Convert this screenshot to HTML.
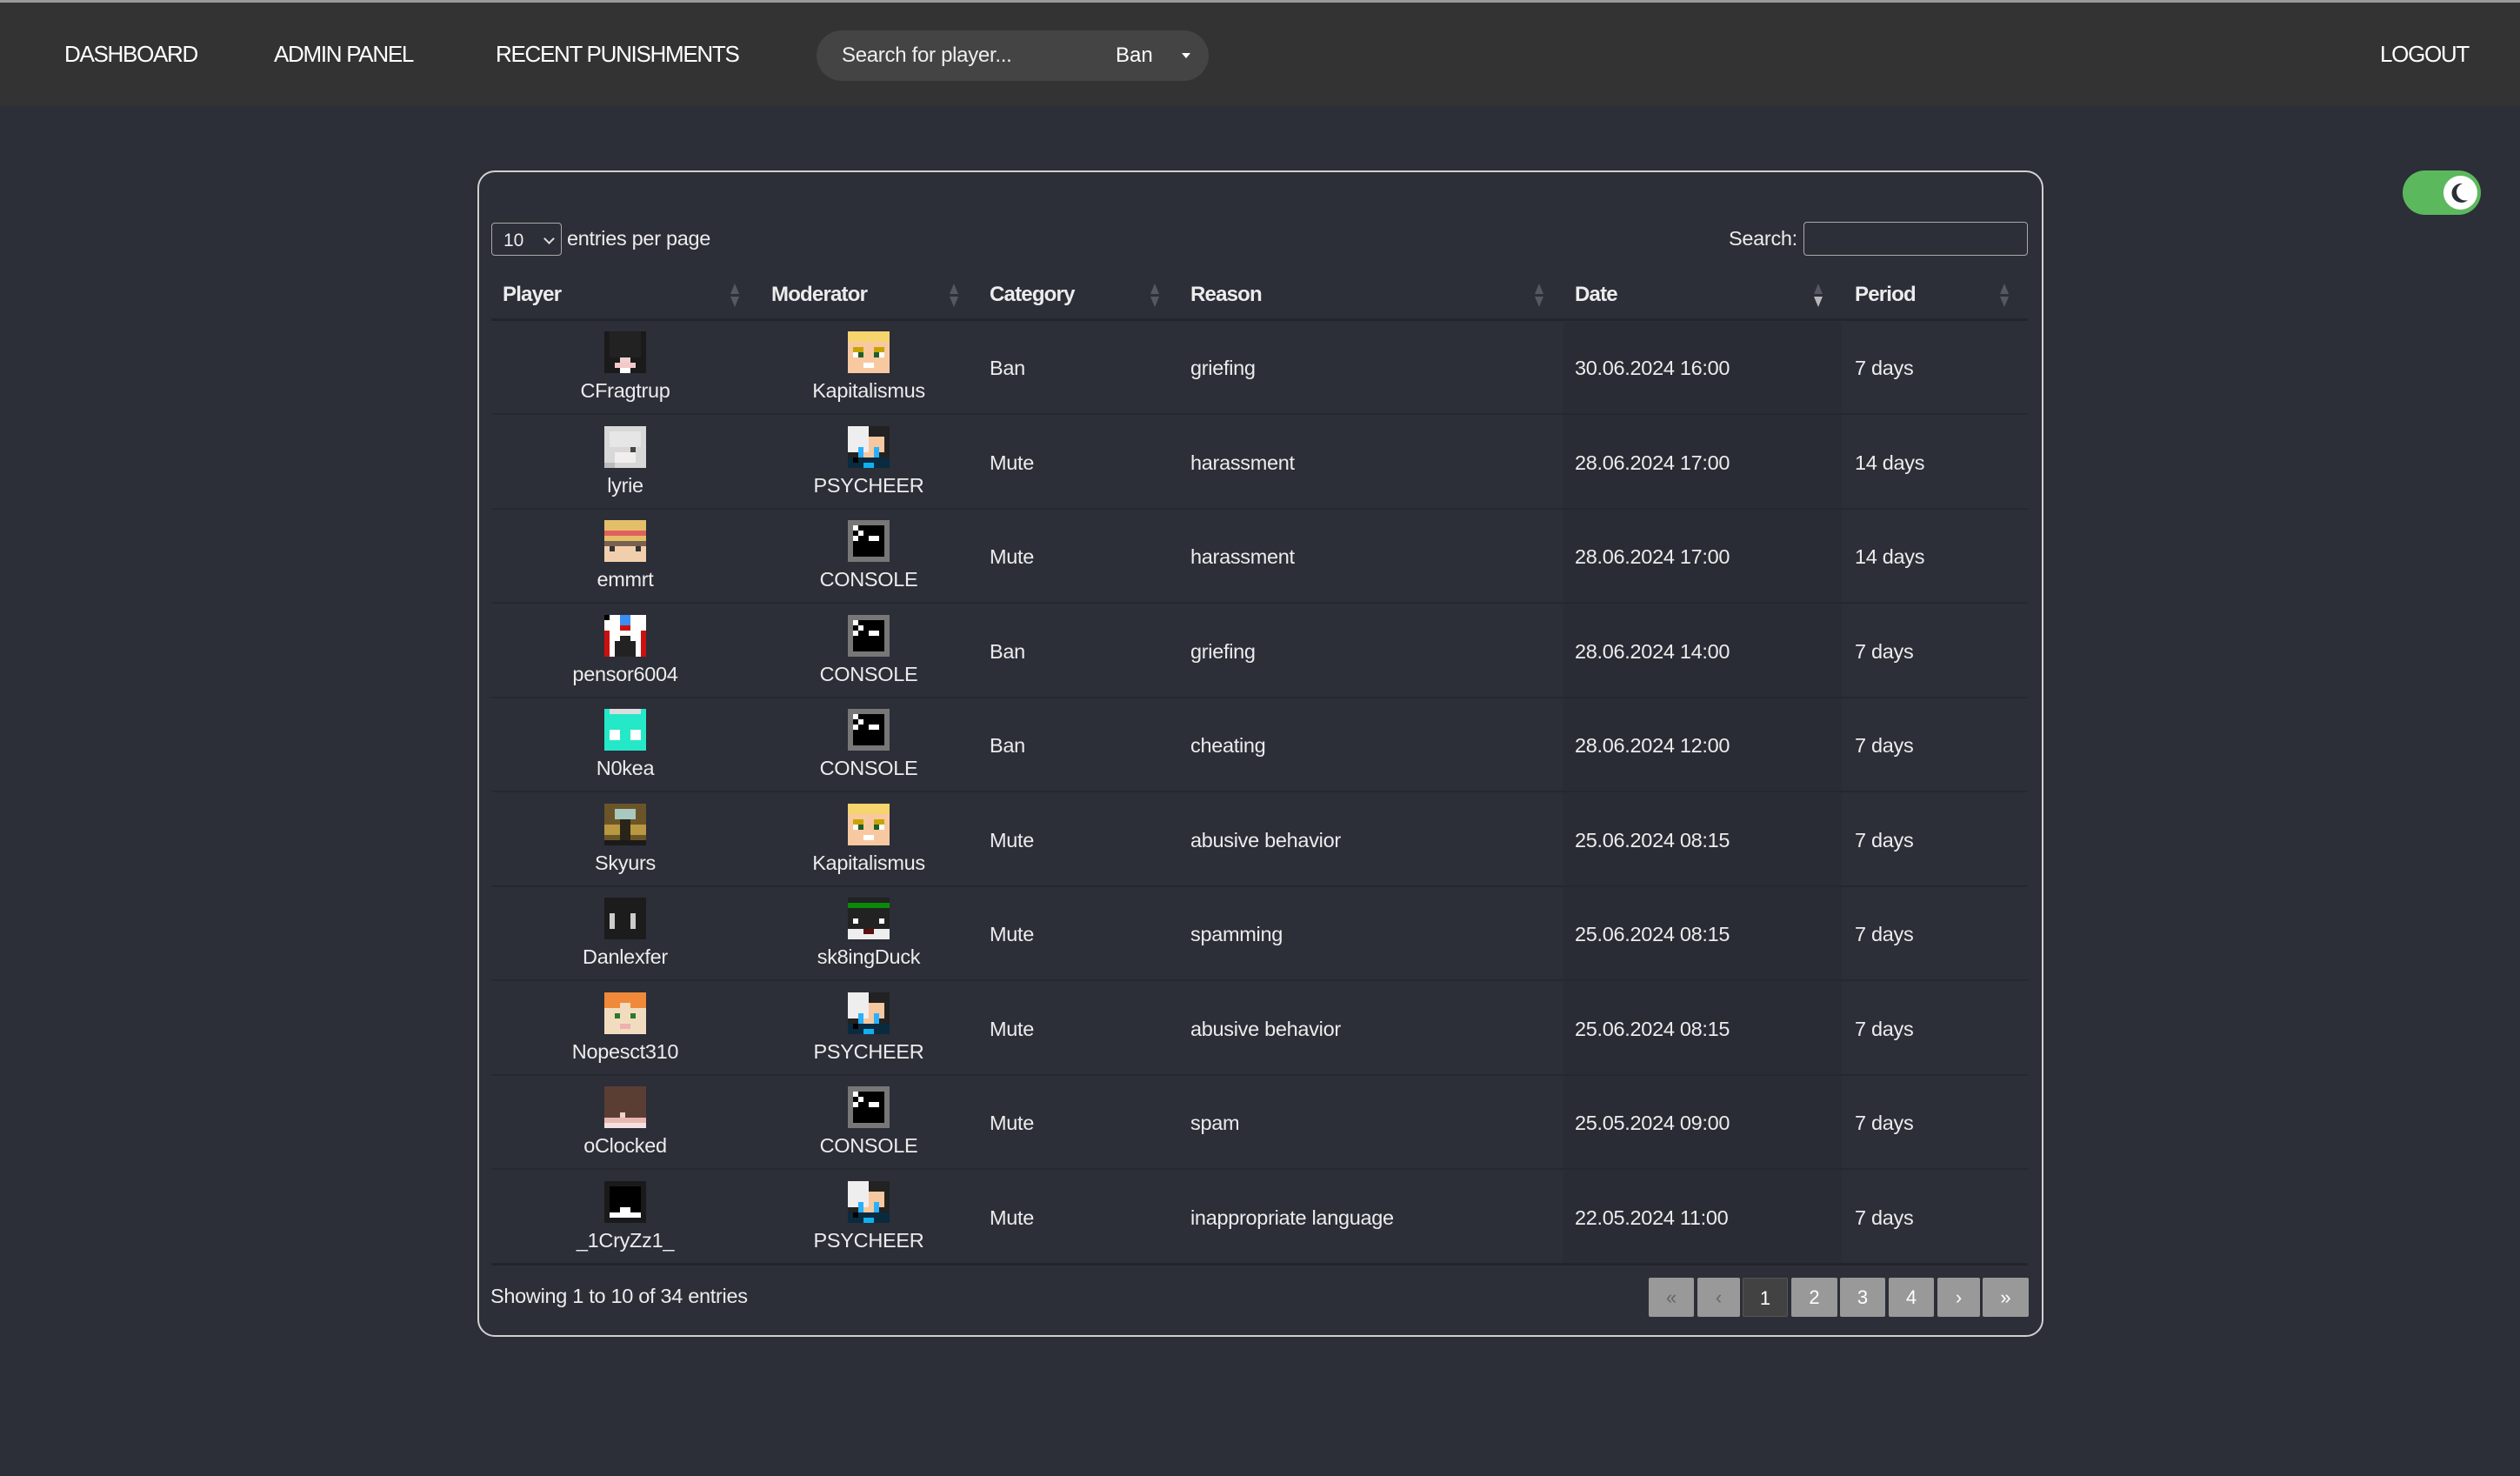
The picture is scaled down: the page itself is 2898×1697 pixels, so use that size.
<!DOCTYPE html>
<html><head><meta charset="utf-8">
<style>
*{margin:0;padding:0;box-sizing:border-box}
html,body{width:2898px;height:1697px;overflow:hidden;background:#2c2e38;font-family:"Liberation Sans",sans-serif;color:#ececec}
.nav{position:absolute;left:0;top:0;width:2898px;height:122px;background:#333333;border-top:3px solid #9a9a9a}
.nav a{position:absolute;top:44px;font-size:26px;color:#fff;letter-spacing:-1.3px;font-weight:500}
.pill{position:absolute;left:939px;top:32px;width:451px;height:58px;background:#444;border-radius:29px}
.pill .ph{position:absolute;left:29px;top:15px;font-size:24px;color:#eee;letter-spacing:-0.3px}
.pill .ban{position:absolute;left:344px;top:15px;font-size:24px;color:#fff}
.pill .car{position:absolute;left:420px;top:26px;width:0;height:0;border-left:5px solid transparent;border-right:5px solid transparent;border-top:6px solid #fff}
.card{position:absolute;left:549px;top:196px;width:1801px;height:1341px;border:2px solid #d0d0d0;border-radius:20px}
.sel{position:absolute;left:565px;top:256px;width:81px;height:38px;border:1.5px solid #aaa;border-radius:4px;font-size:21px;padding:8px 0 0 13px}
.sel:after{content:"";position:absolute;right:9px;top:13px;width:7px;height:7px;border-right:2px solid #ddd;border-bottom:2px solid #ddd;transform:rotate(45deg)}
.t{position:absolute;font-size:23.5px;white-space:nowrap;letter-spacing:-0.3px}
.th{position:absolute;top:325px;font-size:24px;font-weight:bold;letter-spacing:-0.8px}
.sort{position:absolute;top:326px;width:12px;height:28px}
.sort:before{content:"";position:absolute;left:1px;top:0;border-left:5px solid transparent;border-right:5px solid transparent;border-bottom:12px solid #555862}
.sort:after{content:"";position:absolute;left:1px;top:15px;border-left:5px solid transparent;border-right:5px solid transparent;border-top:12px solid #555862}
.sort.d:after{border-top-color:#b8b8b8}
.hline{position:absolute;left:565px;width:1767px;height:3px;background:#23252c}
.rline{position:absolute;left:565px;width:1767px;height:2px;background:#262830}
.datecol{position:absolute;left:1798px;top:370px;width:320px;height:1083px;background:#2a2c35}
.av{position:absolute;width:48px;height:48px}
.name{position:absolute;font-size:23.5px;text-align:center;width:300px;white-space:nowrap;letter-spacing:-0.3px}
.pg{position:absolute;top:1469px;height:45px;background:#999;border-radius:2px;color:#fff;font-size:22px;text-align:center;line-height:45px}
.pg.a{background:#424242;border:1px solid #555}
.pg.dis{color:#666}
.search{position:absolute;left:2074px;top:255px;width:258px;height:39px;border:1.5px solid #aaa;border-radius:4px}
.tog{position:absolute;left:2763px;top:196px;width:90px;height:51px;background:#5cb85c;border-radius:26px}
.tog .k{position:absolute;left:47px;top:6px;width:39px;height:39px;border-radius:50%;background:#fff}
</style></head><body>
<div class="nav">
<a style="left:74px">DASHBOARD</a>
<a style="left:315px">ADMIN PANEL</a>
<a style="left:570px">RECENT PUNISHMENTS</a>
<div class="pill"><span class="ph">Search for player...</span><span class="ban">Ban</span><span class="car"></span></div>
<a style="left:2737px">LOGOUT</a>
</div>
<div class="tog"><div class="k"><svg width="39" height="39" viewBox="0 0 39 39"><path d="M22 9 A11 11 0 1 0 28 28 A9 9 0 1 1 22 9Z" fill="#2c2e38"/></svg></div></div>

<div class="card"></div>
<div class="sel">10</div>
<div class="t" style="left:652px;top:261px">entries per page</div>
<div class="t" style="left:1988px;top:261px">Search:</div>
<div class="search"></div>

<div class="datecol"></div>
<div class="th" style="left:578px">Player</div><div class="sort" style="left:839px"></div>
<div class="th" style="left:887px">Moderator</div><div class="sort" style="left:1091px"></div>
<div class="th" style="left:1138px">Category</div><div class="sort" style="left:1322px"></div>
<div class="th" style="left:1369px">Reason</div><div class="sort" style="left:1764px"></div>
<div class="th" style="left:1811px">Date</div><div class="sort d" style="left:2085px"></div>
<div class="th" style="left:2133px">Period</div><div class="sort" style="left:2299px"></div>
<div class="hline" style="top:366px"></div>

<svg width="0" height="0" style="position:absolute">
<defs>
<g id="cfrag"><rect width="8" height="8" fill="#1a1a1a"/><rect x="1" y="0" width="6" height="5" fill="#222"/><rect x="3" y="5" width="2" height="1" fill="#f0d0d0"/><rect x="2" y="6" width="4" height="1" fill="#f3c8c8"/><rect x="3" y="7" width="2" height="1" fill="#fff"/></g>
<g id="kapi"><rect width="8" height="8" fill="#f8c9a0"/><rect width="8" height="2" fill="#f6d56e"/><rect x="1" y="3" width="2" height="1" fill="#c9a400"/><rect x="5" y="3" width="2" height="1" fill="#c9a400"/><rect x="1" y="4" width="1" height="1" fill="#fff"/><rect x="2" y="4" width="1" height="1" fill="#1f5d2c"/><rect x="5" y="4" width="1" height="1" fill="#1f5d2c"/><rect x="6" y="4" width="1" height="1" fill="#fff"/><rect x="3" y="6" width="2" height="1" fill="#fff"/></g>
<g id="lyrie"><rect width="8" height="8" fill="#d8d8d8"/><rect x="1" y="1" width="6" height="3" fill="#e6e6e6"/><rect x="5" y="4" width="1" height="1" fill="#444"/><rect x="2" y="5" width="4" height="2" fill="#f3eeee"/><rect y="7" width="2" height="1" fill="#bbb"/></g>
<g id="psy"><rect width="8" height="8" fill="#222"/><rect width="4" height="5" fill="#eee"/><rect x="4" y="2" width="3" height="3" fill="#f5c8a0"/><rect x="2" y="4" width="1" height="2" fill="#2ab0ff"/><rect x="5" y="4" width="1" height="2" fill="#2ab0ff"/><rect x="3" y="5" width="2" height="1" fill="#f5c8a0"/><rect y="6" width="8" height="2" fill="#0a2a40"/><rect x="1" y="6" width="1" height="1" fill="#000"/><rect x="3" y="7" width="2" height="1" fill="#10b0f0"/></g>
<g id="con"><rect width="8" height="8" fill="#777"/><rect x="1" y="1" width="6" height="6" fill="#000"/><rect x="1" y="1" width="1" height="1" fill="#fff"/><rect x="2" y="2" width="1" height="1" fill="#fff"/><rect x="1" y="3" width="1" height="1" fill="#fff"/><rect x="4" y="3" width="2" height="1" fill="#fff"/></g>
<g id="emm"><rect width="8" height="8" fill="#f2cfac"/><rect width="8" height="4" fill="#e3c068"/><rect y="2" width="8" height="1" fill="#e06060"/><rect y="4" width="8" height="1" fill="#7a6050"/><rect x="1" y="5" width="1" height="1" fill="#333"/><rect x="6" y="5" width="1" height="1" fill="#333"/></g>
<g id="pen"><rect width="8" height="8" fill="#fff"/><rect x="0" y="3" width="1" height="5" fill="#cc1010"/><rect x="7" y="3" width="1" height="5" fill="#cc1010"/><rect x="3" y="0" width="2" height="2" fill="#3a8ff0"/><rect x="3" y="2" width="2" height="1" fill="#cc1010"/><rect x="2" y="5" width="4" height="3" fill="#222"/><rect x="3" y="4" width="2" height="1" fill="#222"/><rect width="1" height="1" fill="#000"/></g>
<g id="nok"><rect width="8" height="8" fill="#25e8c8"/><rect x="1" y="0" width="6" height="1" fill="#ddd"/><rect x="1" y="4" width="2" height="2" fill="#fff"/><rect x="5" y="4" width="2" height="2" fill="#fff"/></g>
<g id="sky"><rect width="8" height="8" fill="#6b5528"/><rect x="2" y="1" width="4" height="2" fill="#a8c8c0"/><rect y="4" width="3" height="2" fill="#b89840"/><rect x="5" y="4" width="3" height="2" fill="#b89840"/><rect x="3" y="3" width="2" height="5" fill="#2a2418"/><rect y="7" width="8" height="1" fill="#1a1a1a"/></g>
<g id="dan"><rect width="8" height="8" fill="#1c1c1c"/><rect x="1" y="3" width="1" height="3" fill="#ccc"/><rect x="5" y="3" width="1" height="3" fill="#ccc"/></g>
<g id="sk8"><rect width="8" height="8" fill="#222"/><rect y="1" width="8" height="1" fill="#0a8a0a"/><rect x="1" y="4" width="1" height="1" fill="#fff"/><rect x="6" y="4" width="1" height="1" fill="#fff"/><rect y="6" width="8" height="2" fill="#eee"/><rect x="3" y="6" width="2" height="1" fill="#5a1010"/></g>
<g id="nop"><rect width="8" height="8" fill="#f2dcc0"/><rect width="8" height="3" fill="#f08a3a"/><rect x="3" y="2" width="2" height="1" fill="#f2dcc0"/><rect x="2" y="4" width="1" height="1" fill="#2a7a2a"/><rect x="5" y="4" width="1" height="1" fill="#2a7a2a"/><rect x="3" y="6" width="2" height="1" fill="#f0b0b0"/></g>
<g id="ocl"><rect width="8" height="8" fill="#5a3e34"/><rect x="3" y="5" width="1" height="1" fill="#f4d0c8"/><rect y="6" width="8" height="1" fill="#e8b8b0"/><rect y="7" width="8" height="1" fill="#f4e0e0"/></g>
<g id="cry"><rect width="8" height="8" fill="#1a1a1a"/><rect x="1" y="1" width="6" height="5" fill="#000"/><rect x="1" y="6" width="6" height="1" fill="#fff"/><rect x="3" y="5" width="2" height="1" fill="#fff"/></g>
</defs></svg>

<div id="rows"></div>
<script>
var d=[["cfrag","CFragtrup","kapi","Kapitalismus","Ban","griefing","30.06.2024 16:00","7 days"],
["lyrie","lyrie","psy","PSYCHEER","Mute","harassment","28.06.2024 17:00","14 days"],
["emm","emmrt","con","CONSOLE","Mute","harassment","28.06.2024 17:00","14 days"],
["pen","pensor6004","con","CONSOLE","Ban","griefing","28.06.2024 14:00","7 days"],
["nok","N0kea","con","CONSOLE","Ban","cheating","28.06.2024 12:00","7 days"],
["sky","Skyurs","kapi","Kapitalismus","Mute","abusive behavior","25.06.2024 08:15","7 days"],
["dan","Danlexfer","sk8","sk8ingDuck","Mute","spamming","25.06.2024 08:15","7 days"],
["nop","Nopesct310","psy","PSYCHEER","Mute","abusive behavior","25.06.2024 08:15","7 days"],
["ocl","oClocked","con","CONSOLE","Mute","spam","25.05.2024 09:00","7 days"],
["cry","_1CryZz1_","psy","PSYCHEER","Mute","inappropriate language","22.05.2024 11:00","7 days"]];
var h="";
d.forEach(function(r,i){var top=369+i*108.5;
function av(id,cx){return '<svg class="av" style="left:'+(cx-24)+'px;top:'+(top+12)+'px" viewBox="0 0 8 8" shape-rendering="crispEdges"><use href="#'+id+'"/></svg>';}
h+=av(r[0],719)+av(r[2],999);
h+='<div class="name" style="left:569px;top:'+(top+67)+'px">'+r[1]+'</div>';
h+='<div class="name" style="left:849px;top:'+(top+67)+'px">'+r[3]+'</div>';
h+='<div class="t" style="left:1138px;top:'+(top+41)+'px">'+r[4]+'</div>';
h+='<div class="t" style="left:1369px;top:'+(top+41)+'px">'+r[5]+'</div>';
h+='<div class="t" style="left:1811px;top:'+(top+41)+'px">'+r[6]+'</div>';
h+='<div class="t" style="left:2133px;top:'+(top+41)+'px">'+r[7]+'</div>';
if(i<9)h+='<div class="rline" style="top:'+(top+106)+'px"></div>';
});
document.getElementById("rows").innerHTML=h;
</script>
<div class="hline" style="top:1452px"></div>
<div class="t" style="left:564px;top:1477px">Showing 1 to 10 of 34 entries</div>
<div class="pg dis" style="left:1896px;width:52px">«</div>
<div class="pg dis" style="left:1952px;width:49px">‹</div>
<div class="pg a" style="left:2004px;width:52px">1</div>
<div class="pg" style="left:2060px;width:53px">2</div>
<div class="pg" style="left:2116px;width:52px">3</div>
<div class="pg" style="left:2172px;width:52px">4</div>
<div class="pg" style="left:2228px;width:49px">›</div>
<div class="pg" style="left:2280px;width:53px">»</div>
</body></html>
